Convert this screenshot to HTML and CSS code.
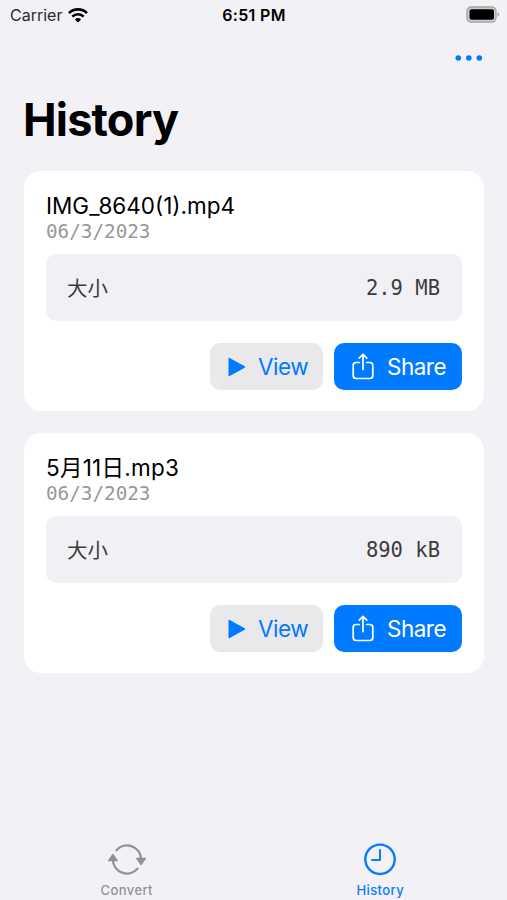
FILE: index.html
```html
<!DOCTYPE html>
<html lang="en">
<head>
  <meta charset="UTF-8">
  <meta name="viewport" content="width=device-width, initial-scale=1.0">
  <title>History</title>
  <link rel="stylesheet" href="styles.css">
</head>
<body>

<div class="status">
  <div class="carrier">
    <span>Carrier</span>
    <svg width="20" height="15" viewBox="0 0 20 15" fill="none" stroke="#000" stroke-width="2.6">
      <path d="M1 5.1a12.8 12.8 0 0 1 18 0"/>
      <path d="M4.3 8.6a8 8 0 0 1 11.4 0"/>
      <path d="M10 14.5L6.9 11.4a4.4 4.4 0 0 1 6.2 0z" fill="#000" stroke="none"/>
    </svg>
  </div>
  <div class="clock">6:51 PM</div>
  <div class="battery">
    <svg width="34" height="17" viewBox="0 0 34 17">
      <rect x="1" y="1" width="29" height="15" rx="4.2" fill="#d0d0d2" stroke="#a2a2a5" stroke-width="1.3"/>
      <rect x="3.5" y="3.3" width="24.5" height="10.4" rx="2" fill="#000"/>
      <path d="M31.5 6.3q1.8.7 1.8 2.2t-1.8 2.2z" fill="#aaaaad"/>
    </svg>
  </div>
</div>

<div class="nav">
  <svg width="28" height="6" viewBox="0 0 28 6" fill="#007aff">
    <circle cx="3.3" cy="3" r="2.8"/>
    <circle cx="13.8" cy="3" r="2.8"/>
    <circle cx="24.3" cy="3" r="2.8"/>
  </svg>
</div>

<h1>History</h1>

<div class="list">
  <div class="card">
    <div class="name">IMG_8640(1).mp4</div>
    <div class="date">06/3/2023</div>
    <div class="info">
      <span class="label">大小</span>
      <span class="size">2.9 MB</span>
    </div>
    <div class="buttons">
      <button class="view">
        <svg width="18" height="20" viewBox="0 0 18 20"><path d="M.5 1.6v16.8q0 1.2 1.2.6l15-8.2q1.2-.8 0-1.6l-15-8.2Q.5.4.5 1.6z" fill="#007aff"/></svg>
        <span>View</span>
      </button>
      <button class="share">
        <svg width="22" height="27" viewBox="0 0 22 27" fill="none" stroke="#fff" stroke-width="1.7" stroke-linecap="round" stroke-linejoin="round">
          <path d="M7.3 9.5H4.2Q1.2 9.5 1.2 12.3v10.2q0 3 3 3h13.6q3 0 3-3V12.3q0-2.8-3-2.8h-3.1"/>
          <path d="M11 16.6V1.6M7.2 5.2L11 1.4l3.8 3.8"/>
        </svg>
        <span>Share</span>
      </button>
    </div>
  </div>

  <div class="card">
    <div class="name cjk">5月11日.mp3</div>
    <div class="date">06/3/2023</div>
    <div class="info">
      <span class="label">大小</span>
      <span class="size">890 kB</span>
    </div>
    <div class="buttons">
      <button class="view">
        <svg width="18" height="20" viewBox="0 0 18 20"><path d="M.5 1.6v16.8q0 1.2 1.2.6l15-8.2q1.2-.8 0-1.6l-15-8.2Q.5.4.5 1.6z" fill="#007aff"/></svg>
        <span>View</span>
      </button>
      <button class="share">
        <svg width="22" height="27" viewBox="0 0 22 27" fill="none" stroke="#fff" stroke-width="1.7" stroke-linecap="round" stroke-linejoin="round">
          <path d="M7.3 9.5H4.2Q1.2 9.5 1.2 12.3v10.2q0 3 3 3h13.6q3 0 3-3V12.3q0-2.8-3-2.8h-3.1"/>
          <path d="M11 16.6V1.6M7.2 5.2L11 1.4l3.8 3.8"/>
        </svg>
        <span>Share</span>
      </button>
    </div>
  </div>
</div>

<div class="tabs">
  <div class="tab">
    <svg width="38" height="34" viewBox="0 0 38 34" fill="none" stroke="#929296" stroke-width="2.4" stroke-linecap="round">
      <path d="M8.5 8.2A14.2 14.2 0 0 1 33.2 17"/>
      <path d="M29.5 26.8A14.2 14.2 0 0 1 4.8 18"/>
      <path d="M28.7 16.3h8.8L33.1 22.6z" fill="#929296" stroke-width="1.2" stroke-linejoin="round"/>
      <path d="M.5 18.7h8.8L4.9 12.4z" fill="#929296" stroke-width="1.2" stroke-linejoin="round"/>
    </svg>
    <span>Convert</span>
  </div>
  <div class="tab active">
    <svg width="34" height="34" viewBox="0 0 34 34" fill="none" stroke="#0a7aff" stroke-width="2.4" stroke-linecap="round" stroke-linejoin="round">
      <circle cx="17" cy="17.3" r="14.7"/>
      <path d="M17 8v10H9" stroke-width="2"/>
    </svg>
    <span>History</span>
  </div>
</div>

</body>
</html>
```
FILE: styles.css
```css
body {
  margin: 0;
  height: 900px;
  display: flex;
  flex-direction: column;
  background-color: #f1f1f6;
  font-family: 'Inter', 'Noto Sans CJK SC', sans-serif;
  color: #000;
  overflow: hidden;
}

svg {
  display: block;
  flex-shrink: 0;
}

.status {
  display: grid;
  grid-template-columns: 1fr auto 1fr;
  align-items: center;
  height: 30px;
  padding: 0 7px 0 10px;
  font-size: 16px;
}
.carrier {
  display: flex;
  align-items: center;
  gap: 6px;
  color: #2b2b2d;
}
.clock {
  font-weight: 600;
  letter-spacing: 0.3px;
  padding-right: 2px;
}
.battery {
  display: flex;
  justify-content: flex-end;
  padding-bottom: 2px;
}

.nav {
  display: flex;
  justify-content: flex-end;
  align-items: center;
  height: 56px;
  padding-right: 24px;
}

h1 {
  margin: 0;
  padding-left: 23px;
  height: 85px;
  font-size: 45px;
  line-height: 68px;
  font-weight: 700;
  letter-spacing: -0.8px;
}

.list {
  display: flex;
  flex-direction: column;
  gap: 22px;
  padding: 0 23px 0 24px;
}
.card {
  box-sizing: border-box;
  height: 240px;
  padding: 22px;
  border-radius: 17px;
  background-color: #fff;
}
.name {
  height: 27px;
  line-height: 26px;
  font-size: 22.5px;
}
.cjk {
  letter-spacing: 0.25px;
}
.date {
  height: 24px;
  line-height: 24px;
  font-family: 'DejaVu Sans Mono', monospace;
  font-size: 19.3px;
  color: #98989a;
}
.info {
  display: flex;
  justify-content: space-between;
  align-items: center;
  height: 67px;
  margin-top: 10px;
  padding: 0 22px 0 21px;
  border-radius: 10px;
  background-color: #f1f1f5;
  box-sizing: border-box;
  color: #3c3c3e;
}
.label {
  padding-bottom: 2px;
  font-size: 20.5px;
}
.size {
  font-family: 'DejaVu Sans Mono', monospace;
  font-size: 20.5px;
}

.buttons {
  display: flex;
  justify-content: flex-end;
  gap: 11px;
  margin-top: 22px;
}
button {
  display: flex;
  align-items: center;
  box-sizing: border-box;
  height: 47px;
  border: none;
  border-radius: 10px;
  font-family: inherit;
  font-size: 22.5px;
  letter-spacing: -0.5px;
}
.view {
  width: 113px;
  padding: 0 0 0 18px;
  gap: 12px;
  background-color: #e9e9eb;
  color: #007aff;
}
.share {
  width: 128px;
  padding: 0 0 0 18px;
  gap: 13px;
  background-color: #007aff;
  color: #fff;
}

.tabs {
  display: grid;
  grid-template-columns: 1fr 1fr;
  margin-top: auto;
  height: 58px;
}
.tab {
  display: flex;
  flex-direction: column;
  align-items: center;
  gap: 6px;
  font-size: 13px;
  line-height: 16px;
  font-weight: 500;
  letter-spacing: 0.4px;
  color: #929296;
}
.active {
  color: #0a7aff;
}
```
